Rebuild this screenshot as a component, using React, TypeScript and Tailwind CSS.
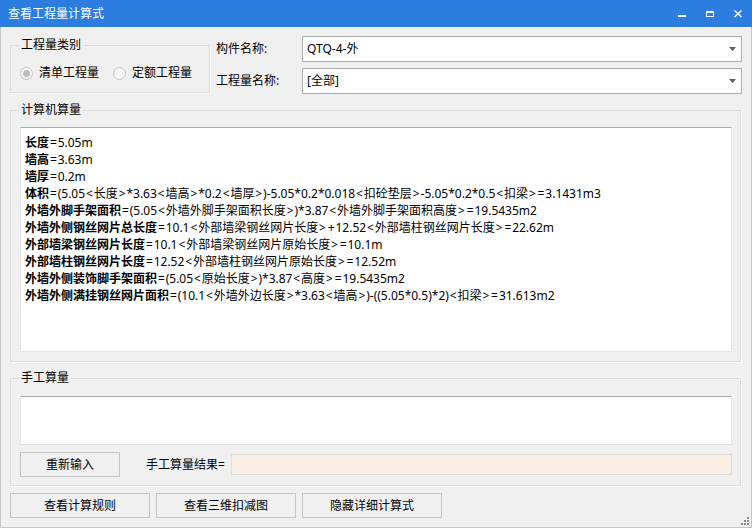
import React from "react";

const lines: [string, string][] = [
  ["长度", "=5.05m"],
  ["墙高", "=3.63m"],
  ["墙厚", "=0.2m"],
  ["体积", "=(5.05<长度>*3.63<墙高>*0.2<墙厚>)-5.05*0.2*0.018<扣砼垫层>-5.05*0.2*0.5<扣梁>=3.1431m3"],
  ["外墙外脚手架面积", "=(5.05<外墙外脚手架面积长度>)*3.87<外墙外脚手架面积高度>=19.5435m2"],
  ["外墙外侧钢丝网片总长度", "=10.1<外部墙梁钢丝网片长度>+12.52<外部墙柱钢丝网片长度>=22.62m"],
  ["外部墙梁钢丝网片长度", "=10.1<外部墙梁钢丝网片原始长度>=10.1m"],
  ["外部墙柱钢丝网片长度", "=12.52<外部墙柱钢丝网片原始长度>=12.52m"],
  ["外墙外侧装饰脚手架面积", "=(5.05<原始长度>)*3.87<高度>=19.5435m2"],
  ["外墙外侧满挂钢丝网片面积", "=(10.1<外墙外边长度>*3.63<墙高>)-((5.05*0.5)*2)<扣梁>=31.613m2"],
];

function Formula({ text }: { text: string }) {
  const parts = text.split(/([<>=+])/);
  return (
    <>
      {parts.map((p, i) =>
        p === "<" || p === ">" || p === "=" || p === "+" ? (
          <span key={i} className="px-[0.9px]">
            {p}
          </span>
        ) : (
          <span key={i}>{p}</span>
        )
      )}
    </>
  );
}

function Arrow() {
  return (
    <svg width="7" height="4" viewBox="0 0 7 4">
      <polygon points="0,0 7,0 3.5,4" fill="#5f5f5f" />
    </svg>
  );
}

function Combo({ value }: { value: string }) {
  return (
    <div className="w-[440px] h-[26px] border border-[#adadad] bg-white flex items-center justify-between pl-[4px] pr-[5px]">
      <span>{value}</span>
      <Arrow />
    </div>
  );
}

function Btn({ children, w }: { children: React.ReactNode; w: string }) {
  return (
    <div className={`${w} h-[25px] border border-[#c4c4c4] bg-[#f0f0f0] flex items-center justify-center`}>
      {children}
    </div>
  );
}

export default function App() {
  return (
    <div className="w-[752px] h-[528px] flex flex-col bg-[#f0f0f0] text-[12px] leading-[14px] text-black font-['Noto_Sans','Noto_Sans_CJK_SC',sans-serif] overflow-hidden">
      {/* title bar */}
      <div className="h-[27px] shrink-0 bg-[#2b7de0] flex items-center justify-between text-white">
        <span className="pl-[8px] text-[12px]">查看工程量计算式</span>
        <div className="flex h-full">
          <div className="w-[28px] flex justify-center pt-[10px]">
            <svg width="8" height="8" viewBox="0 0 8 8">
              <rect x="0" y="5" width="8" height="2" fill="#fff" />
            </svg>
          </div>
          <div className="w-[28px] flex justify-center pt-[10px]">
            <svg width="8" height="8" viewBox="0 0 8 8">
              <rect x="0" y="1" width="8" height="2" fill="#fff" />
              <rect x="0" y="1" width="1" height="6" fill="#fff" />
              <rect x="7" y="1" width="1" height="6" fill="#fff" />
              <rect x="0" y="6" width="8" height="1" fill="#fff" />
            </svg>
          </div>
          <div className="w-[28px] flex justify-center pt-[10px]">
            <svg width="8" height="8" viewBox="0 0 8 8">
              <path d="M0.5 0.5 L7.5 7 M7.5 0.5 L0.5 7" stroke="#fff" strokeWidth="1.4" fill="none" />
            </svg>
          </div>
        </div>
      </div>

      {/* body */}
      <div className="flex-1 relative border-x border-b border-[#c2c6cc] pl-[9px] pt-[9px]">
        {/* top row */}
        <div className="flex items-start">
          <fieldset className="w-[200px] h-[55px] mt-[2px] border border-[#dcdcdc] shadow-[1px_1px_0_#fff] min-w-0">
            <legend className="ml-[8px] px-[2px] leading-[14px]">工程量类别</legend>
            <div className="flex items-center mt-[14px] pl-[9px] h-[14px]">
              <div className="w-[13px] h-[13px] rounded-full border border-[#c4c4c4] bg-[#f6f6f6] flex items-center justify-center">
                <div className="w-[7px] h-[7px] rounded-full bg-[#bdbdbd]" />
              </div>
              <span className="ml-[6px]">清单工程量</span>
              <div className="ml-[14px] w-[13px] h-[13px] rounded-full border border-[#c4c4c4] bg-[#f6f6f6]" />
              <span className="ml-[6px]">定额工程量</span>
            </div>
          </fieldset>
          <div className="ml-[6px] flex flex-col gap-[6px]">
            <div className="flex items-center h-[26px]">
              <span className="w-[86px]">构件名称:</span>
              <Combo value="QTQ-4-外" />
            </div>
            <div className="flex items-center h-[26px]">
              <span className="w-[86px]">工程量名称:</span>
              <Combo value="[全部]" />
            </div>
          </div>
        </div>

        {/* computer quantity */}
        <fieldset className="mt-[9px] w-[731px] h-[259px] border border-[#dcdcdc] shadow-[1px_1px_0_#fff] min-w-0">
          <legend className="ml-[8px] px-[2px] leading-[14px]">计算机算量</legend>
          <div className="mt-[10px] ml-[9px] w-[712px] h-[225px] border border-[#e3e3e3] border-t-[#abadb3] bg-white pl-[4px] pt-[6px] leading-[17px] whitespace-nowrap overflow-hidden">
            {lines.map(([a, b], i) => (
              <div key={i}>
                <span className="font-bold">{a}</span>
                <Formula text={b} />
              </div>
            ))}
          </div>
        </fieldset>

        {/* manual quantity */}
        <fieldset className="mt-[9px] w-[731px] h-[115px] border border-[#dcdcdc] shadow-[1px_1px_0_#fff] min-w-0">
          <legend className="ml-[8px] px-[2px] leading-[14px]">手工算量</legend>
          <div className="mt-[11px] ml-[9px] w-[712px] h-[49px] border border-[#e3e3e3] border-t-[#abadb3] bg-white" />
          <div className="mt-[7px] ml-[9px] w-[712px] h-[25px] flex items-center">
            <Btn w="w-[100px]">重新输入</Btn>
            <span className="ml-[26px]">手工算量结果=</span>
            <div className="ml-[6px] flex-1 h-[21px] border border-[#dcdcdc] bg-[#faefe5]" />
          </div>
        </fieldset>

        {/* bottom buttons */}
        <div className="mt-[7px] flex gap-[6px]">
          <Btn w="w-[140px]">查看计算规则</Btn>
          <Btn w="w-[140px]">查看三维扣减图</Btn>
          <Btn w="w-[140px]">隐藏详细计算式</Btn>
        </div>

        {/* resize grip */}
        <svg className="absolute right-[2px] bottom-[2px]" width="8" height="8" viewBox="0 0 8 8">
          <rect x="6" y="0" width="2" height="2" fill="#8a8a8a" />
          <rect x="3" y="3" width="2" height="2" fill="#8a8a8a" />
          <rect x="6" y="3" width="2" height="2" fill="#8a8a8a" />
          <rect x="0" y="6" width="2" height="2" fill="#8a8a8a" />
          <rect x="3" y="6" width="2" height="2" fill="#8a8a8a" />
          <rect x="6" y="6" width="2" height="2" fill="#8a8a8a" />
        </svg>
      </div>
    </div>
  );
}
